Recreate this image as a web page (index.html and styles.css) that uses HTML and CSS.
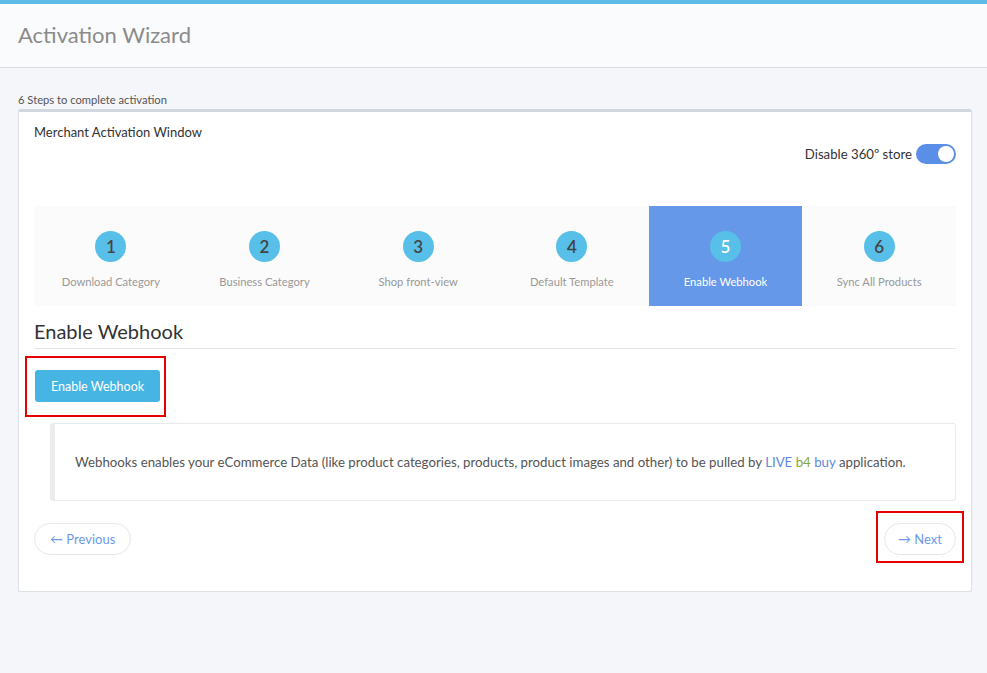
FILE: index.html
```html
<!DOCTYPE html>
<html>
<head>
<meta charset="utf-8">
<link rel="stylesheet" href="styles.css">
</head>
<body>
<header class="header">
  <h1 class="title">Activation Wizard</h1>
</header>
<main class="main">
  <div class="subtitle">6 Steps to complete activation</div>
  <section class="card">
    <div class="card-title">Merchant Activation Window</div>
    <div class="toggle-row">
      <span class="toggle-label">Disable 360º store</span>
      <span class="toggle"><span class="knob"></span></span>
    </div>
    <div class="steps">
      <div class="step"><span class="num">1</span><span class="label">Download Category</span></div>
      <div class="step"><span class="num">2</span><span class="label">Business Category</span></div>
      <div class="step"><span class="num">3</span><span class="label">Shop front-view</span></div>
      <div class="step"><span class="num">4</span><span class="label">Default Template</span></div>
      <div class="step active"><span class="num">5</span><span class="label">Enable Webhook</span></div>
      <div class="step"><span class="num">6</span><span class="label">Sync All Products</span></div>
    </div>
    <h2 class="section-title">Enable Webhook</h2>
    <div class="highlight hl-enable">
      <button class="btn-primary">Enable Webhook</button>
    </div>
    <div class="callout">
      Webhooks enables your eCommerce Data (like product categories, products, product images and other) to be pulled by <span class="blue">LIVE</span> <span class="green">b4</span> <span class="blue">buy</span> application.
    </div>
    <div class="nav-row">
      <button class="btn-pill btn-prev">← Previous</button>
      <div class="highlight hl-next">
        <button class="btn-pill btn-next">→ Next</button>
      </div>
    </div>
  </section>
</main>
</body>
</html>
```
FILE: styles.css
```css
* { box-sizing: border-box; }
html, body { margin: 0; padding: 0; }
body {
  background: #f4f6fa;
  font-family: "Source Sans Pro", Lato, "Liberation Sans", sans-serif;
  color: #333;
  font-size: 13px;
}
.header {
  border-top: 4px solid #5cbce6;
  background: #fafbfd;
  border-bottom: 1px solid #d8dce3;
  height: 68px;
  padding: 0 18px 3px 18px;
  display: flex;
  align-items: center;
}
.title {
  margin: 0;
  font-weight: 400;
  font-size: 22px;
  color: #8b8b8b;
}
.main {
  padding: 0 15px 0 18px;
}
.subtitle {
  margin-top: 24px;
  font-size: 11.2px;
  color: #555;
  line-height: 16px;
}
.card {
  margin-top: 1px;
  background: #fff;
  border: 1px solid #dde1e6;
  border-top: 3px solid #d2d6de;
  border-radius: 3px;
  box-shadow: 0 1px 1px rgba(0,0,0,0.08);
  padding: 11px 15px 28px 15px;
}
.card-title {
  font-size: 13px;
  line-height: 18px;
  color: #333;
}
.toggle-row {
  display: flex;
  justify-content: flex-end;
  align-items: center;
  gap: 4px;
  margin-top: 3px;
}
.toggle-label { font-size: 13.2px; color: #333; }
.toggle {
  width: 40px;
  height: 20px;
  border-radius: 10px;
  background: #5b8fe7;
  position: relative;
  display: inline-block;
}
.knob {
  position: absolute;
  right: 2px;
  top: 2px;
  width: 16px;
  height: 16px;
  border-radius: 50%;
  background: #fff;
}
.steps {
  margin-top: 42px;
  display: grid;
  grid-template-columns: repeat(6, 1fr);
  background: #fbfbfb;
  height: 100px;
}
.step {
  display: flex;
  flex-direction: column;
  align-items: center;
  padding-top: 25px;
}
.step.active { background: #6698ea; }
.num {
  width: 31px;
  height: 31px;
  border-radius: 50%;
  background: #57bfe8;
  color: #444;
  font-size: 17px;
  font-weight: 600;
  display: flex;
  align-items: center;
  justify-content: center;
}
.label {
  margin-top: 13px;
  font-size: 11.2px;
  color: #999;
}
.step.active .num { color: #fff; }
.step.active .label { color: #fff; }
.section-title {
  margin: 10px 0 0 0;
  font-weight: 400;
  font-size: 20px;
  line-height: 30px;
  color: #333;
  padding-bottom: 2px;
  border-bottom: 1px solid #e3e5e8;
}
.highlight {
  border: 2px solid #e60000;
}
.hl-enable {
  display: inline-block;
  margin: 7px 0 0 -9px;
  padding: 12px 4px 13px 8px;
}
.btn-primary {
  display: block;
  border: 0;
  border-radius: 3px;
  background: #47b5e4;
  color: #fff;
  font-family: inherit;
  font-size: 12.5px;
  width: 125px;
  height: 32px;
  padding: 0;
}
.callout {
  margin: 6px 0 0 16px;
  border: 1px solid #eaeaea;
  border-left: 5px solid #ececec;
  border-radius: 3px;
  padding: 28px 20px 28px 20px;
  font-size: 13.25px;
  line-height: 20px;
  color: #555;
}
.blue { color: #5f88df; }
.green { color: #86a83f; }
.nav-row {
  display: flex;
  justify-content: space-between;
  align-items: flex-start;
  margin-top: 10px;
}
.btn-pill {
  display: block;
  background: #fff;
  border: 1px solid #e8e8e8;
  border-radius: 16px;
  height: 32px;
  padding: 0 15px;
  font-family: inherit;
  font-size: 13px;
  color: #6c9aea;
}
.btn-prev { margin-top: 12px; }
.btn-next { padding: 0 13px; }
.hl-next {
  margin-right: -8px;
  padding: 10px 6px 6px 6px;
}
```
